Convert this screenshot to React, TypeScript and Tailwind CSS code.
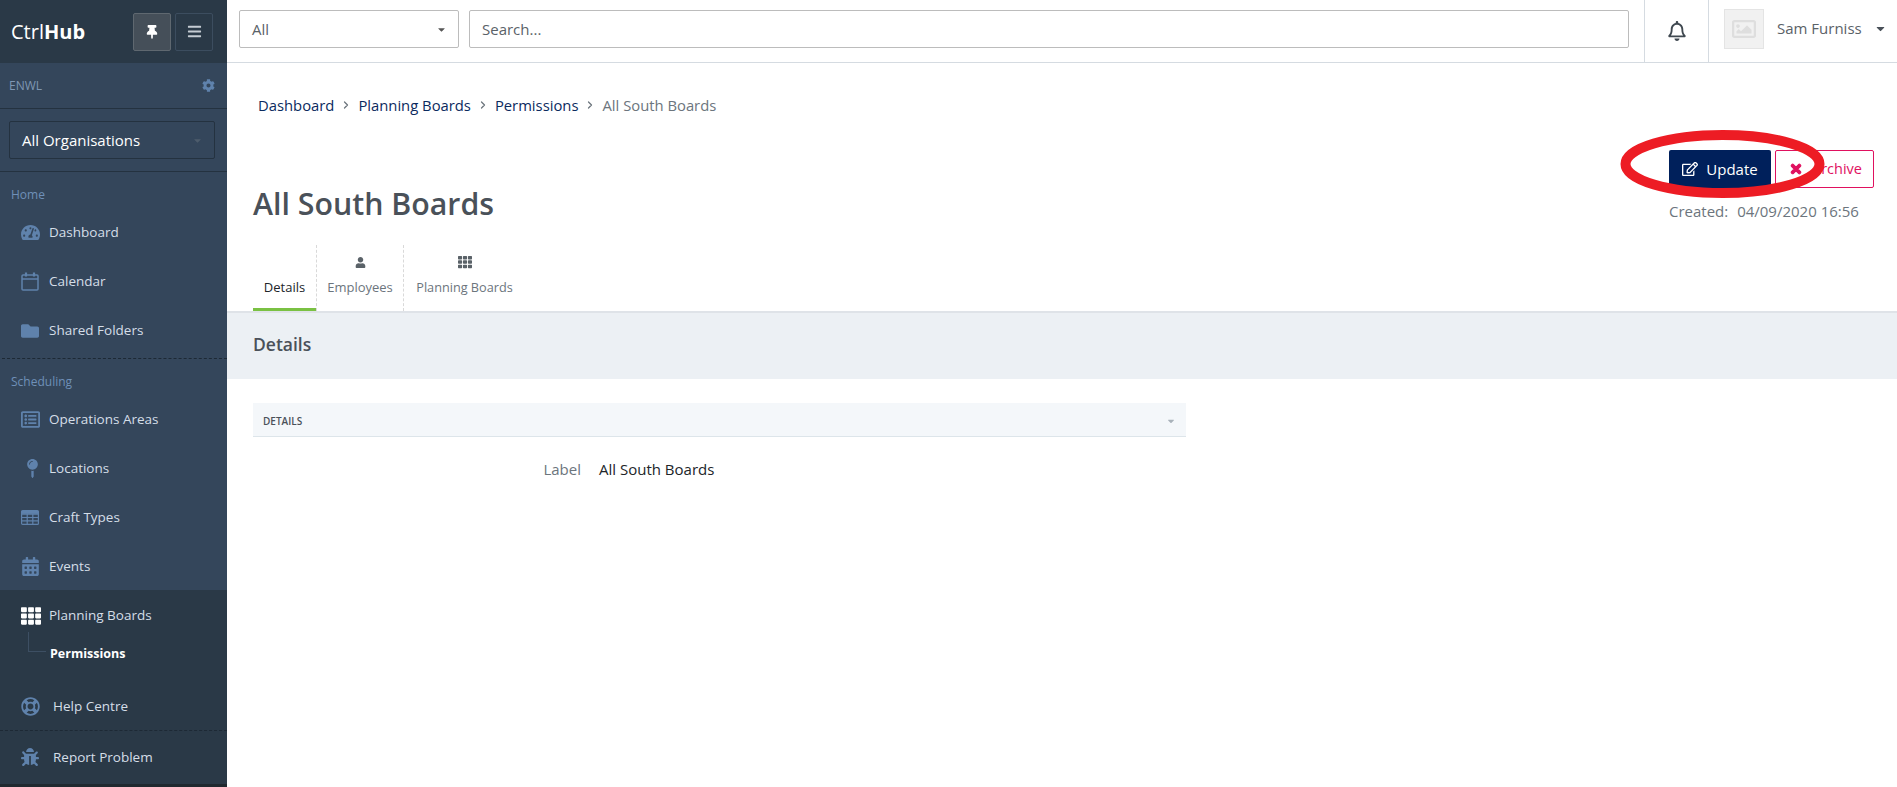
import type { ReactNode } from 'react';
import { ChevronRight } from 'lucide-react';
import {
    FaBars,
    FaBug,
    FaCalendarAlt,
    FaCaretDown,
    FaCog,
    FaFolder,
    FaMapPin,
    FaRegBell,
    FaRegEdit,
    FaRegImage,
    FaRegLifeRing,
    FaRegListAlt,
    FaTachometerAlt,
    FaTh,
    FaThumbtack,
    FaTimes,
    FaUser,
} from 'react-icons/fa';

const CalendarIcon = () => (
    <svg width="18" height="19" viewBox="0 0 18 19" fill="none" stroke="currentColor" strokeWidth="1.5">
        <rect x="1" y="3" width="16" height="15" rx="1" />
        <path d="M1 7h16" />
        <path d="M5 0.5v4M13 0.5v4" strokeWidth="2.2" />
    </svg>
);

const GridIcon = () => (
    <svg width="18" height="15" viewBox="0 0 18 15" fill="none" stroke="currentColor" strokeWidth="1.2">
        <rect x="0.6" y="0.6" width="16.8" height="13.8" rx="1" />
        <path d="M0.6 4.2h16.8M0.6 7.5h16.8M0.6 10.9h16.8M6.2 4.2v10.2M11.8 4.2v10.2" />
        <path d="M0.6 2.4h16.8" strokeWidth="3" />
    </svg>
);

const NavItem = ({ icon, label }: { icon: ReactNode; label: string }) => (
    <div className="flex h-[49px] items-center pl-[21px] text-[13.5px] text-[#d5dee8]">
        <span className="w-[28px] shrink-0 text-[#5f82ac]">{icon}</span>
        {label}
    </div>
);

const Crumb = ({ label }: { label: string }) => (
    <>
        <span className="text-[#0b2a5e]">{label}</span>
        <ChevronRight size={12} strokeWidth={2.5} className="mx-[6px] text-[#6c757d]" />
    </>
);

export default function App() {
    return (
        <div className="relative flex h-screen w-full overflow-hidden bg-white font-['Open_Sans','Noto_Sans',sans-serif] text-[#4a5159]">
            <aside className="flex h-full w-[227px] shrink-0 flex-col bg-[#34465b]">
                <div className="flex h-[63px] shrink-0 items-center justify-between bg-[#2a3947] pl-[11px] pr-[14px]">
                    <span className="text-[20px] text-white">
                        Ctrl<span className="font-bold">Hub</span>
                    </span>
                    <div className="flex gap-[4px]">
                        <button className="flex h-[38px] w-[38px] items-center justify-center rounded-[2px] border border-[#5f6870] bg-[#454f59] text-[14px] text-white">
                            <FaThumbtack />
                        </button>
                        <button className="flex h-[38px] w-[38px] items-center justify-center rounded-[2px] border border-[#3c4d5f] text-[15px] text-[#c5ccd3]">
                            <FaBars />
                        </button>
                    </div>
                </div>

                <div className="flex h-[46px] shrink-0 items-center justify-between border-b border-[#243240] pl-[9px] pr-[12px] text-[12px] text-[#7f97b3]">
                    ENWL
                    <FaCog className="text-[13px] text-[#5f82ac]" />
                </div>
                <div className="flex h-[63px] shrink-0 items-center border-b border-[#243240] pl-[9px] pr-[12px]">
                    <div className="flex h-[38px] w-full items-center justify-between rounded-[2px] border border-[#243240] pl-[12px] pr-[11px] text-[15px] text-white">
                        All Organisations
                        <FaCaretDown className="text-[11px] text-[#4d5c6c]" />
                    </div>
                </div>

                <div className="pl-[11px] pt-[13px] text-[12px] leading-[20px] text-[#6f90b8]">Home</div>
                <div className="mt-[3px]">
                    <NavItem icon={<FaTachometerAlt className="text-[19px]" />} label="Dashboard" />
                    <NavItem icon={<CalendarIcon />} label="Calendar" />
                    <NavItem icon={<FaFolder className="text-[18px]" />} label="Shared Folders" />
                </div>
                <div className="ml-[2px] mt-[3px] border-t border-dashed border-[#1d2935]" />
                <div className="pl-[11px] pt-[13px] text-[12px] leading-[20px] text-[#6f90b8]">Scheduling</div>
                <div className="mt-[2px] [&>div]:pt-[2px]">
                    <NavItem icon={<FaRegListAlt className="text-[19px]" />} label="Operations Areas" />
                    <NavItem icon={<FaMapPin className="ml-[2px] text-[19px]" />} label="Locations" />
                    <NavItem icon={<GridIcon />} label="Craft Types" />
                    <NavItem icon={<FaCalendarAlt className="text-[19px]" />} label="Events" />
                </div>

                <div className="flex flex-1 flex-col bg-[#2a3947]">
                    <div className="flex h-[49px] items-center pl-[21px] pt-[2px] text-[13.5px] text-[#d5dee8]">
                        <span className="w-[28px] shrink-0 text-white">
                            <FaTh className="text-[20px]" />
                        </span>
                        Planning Boards
                    </div>
                    <div className="relative h-[28px] pl-[50px] text-[12.5px] font-bold leading-[29px] text-white">
                        <span className="absolute left-[28px] top-[-7px] h-[20px] w-[18px] border-b border-l border-[#3d4f63]" />
                        Permissions
                    </div>
                    <div className="mt-[15px] flex h-[49px] items-center border-b border-dashed border-[#1d2935] pl-[21px] text-[13.5px] text-[#d5dee8]">
                        <span className="w-[32px] shrink-0 text-[#5f82ac]">
                            <FaRegLifeRing className="text-[19px]" />
                        </span>
                        Help Centre
                    </div>
                    <div className="flex h-[52px] items-center pl-[21px] text-[13.5px] text-[#d5dee8]">
                        <span className="w-[32px] shrink-0 text-[#5f82ac]">
                            <FaBug className="text-[18px]" />
                        </span>
                        Report Problem
                    </div>
                    <div className="mt-auto h-[3px] bg-[#20292f]" />
                </div>
            </aside>

            <main className="flex min-w-0 flex-1 flex-col">
                <header className="flex h-[63px] shrink-0 items-start border-b border-[#d5dbe1] pl-[12px]">
                    <div className="mt-[10px] flex h-[38px] w-[220px] items-center justify-between rounded-[2px] border border-[#bcbcbc] pl-[12px] pr-[11px] text-[15px] text-[#5a6268]">
                        All
                        <FaCaretDown className="text-[11px] text-[#555]" />
                    </div>
                    <div className="ml-[10px] mt-[10px] flex h-[38px] w-[1160px] items-center rounded-[2px] border border-[#bcbcbc] pl-[12px] text-[15px] text-[#5a6268]">
                        Search...
                    </div>
                    <div className="ml-[15px] flex h-full w-[65px] items-center justify-center border-x border-[#d5dbe1] text-[20px] text-[#3f4850]">
                        <FaRegBell />
                    </div>
                    <div className="ml-[15px] mt-[9px] flex h-[40px] w-[40px] items-center justify-center border border-[#e4e4e4] bg-[#f1f1f1] text-[24px] text-[#dedede]">
                        <FaRegImage />
                    </div>
                    <span className="ml-[13px] mt-[18px] text-[15px] leading-[20px] text-[#5a6268]">Sam Furniss</span>
                    <FaCaretDown className="ml-[12px] mt-[22px] text-[13px] text-[#4a5159]" />
                </header>

                <nav className="flex h-[84px] shrink-0 items-center pl-[31px] text-[14.8px]">
                    <Crumb label="Dashboard" />
                    <Crumb label="Planning Boards" />
                    <Crumb label="Permissions" />
                    <span className="text-[#6c757d]">All South Boards</span>
                </nav>

                <div className="flex h-[98px] shrink-0 justify-between pl-[26px] pr-[23px] pt-[3px]">
                    <h1 className="pt-[33px] text-[30.3px] font-semibold leading-[42px]">All South Boards</h1>
                    <div className="flex flex-col">
                        <div className="flex gap-[4px]">
                            <button className="flex h-[38px] w-[102px] items-center justify-center gap-[8px] rounded-[2px] bg-[#00205b] text-[15px] text-white">
                                <FaRegEdit className="text-[16px]" />
                                Update
                            </button>
                            <button className="flex h-[38px] w-[99px] items-center gap-[9px] rounded-[2px] border border-[#e0115f] pl-[13px] text-[14.5px] text-[#e0115f]">
                                <FaTimes className="text-[14px]" stroke="currentColor" strokeWidth={40} />
                                Archive
                            </button>
                        </div>
                        <div className="mt-[13px] text-[15px] leading-[20px] text-[#6c757d]">
                            Created: <span className="ml-[5px]">04/09/2020 16:56</span>
                        </div>
                    </div>
                </div>

                <div className="flex h-[66px] shrink-0 pl-[26px] text-[13px] leading-[18px]">
                    <div className="flex w-[63px] items-end justify-center border-b-[3px] border-b-[#7ac143] pb-[12px] text-[#212529]">
                        Details
                    </div>
                    <div className="flex w-[88px] flex-col items-center border-x border-dashed border-[#d9d9d9] pt-[10px] text-[#6c757d]">
                        <span className="mb-[9px] flex h-[14px] items-center text-[11px] text-[#5a6268]">
                            <FaUser />
                        </span>
                        Employees
                    </div>
                    <div className="flex w-[121px] flex-col items-center pt-[10px] text-[12.7px] text-[#6c757d]">
                        <span className="mb-[9px] flex h-[14px] items-center text-[14px] text-[#5a6268]">
                            <FaTh />
                        </span>
                        Planning Boards
                    </div>
                </div>

                <div className="flex h-[68px] shrink-0 items-start border-t-2 border-[#dfe3e8] bg-[#ecf0f4] pl-[26px] pt-[19px] text-[17.5px] font-semibold leading-[24px]">
                    Details
                </div>

                <section className="ml-[26px] mt-[24px] w-[933px]">
                    <div className="flex h-[34px] items-center justify-between border-b border-[#dde5ea] bg-[#f4f7fa] pl-[10px] pr-[10px] pt-[3px] text-[10px] font-semibold text-[#4a5159]">
                        DETAILS
                        <FaCaretDown className="text-[10px] text-[#a9b2ba]" />
                    </div>
                    <div className="mt-[22px] flex text-[15px] leading-[20px]">
                        <span className="w-[328px] text-right text-[#6c757d]">Label</span>
                        <span className="ml-[18px] text-[#212529]">All South Boards</span>
                    </div>
                </section>
            </main>

            <svg
                className="pointer-events-none absolute left-[1615px] top-[124px] h-[90px] w-[220px]"
                viewBox="0 0 220 90"
                fill="none"
            >
                <ellipse cx="107.5" cy="40" rx="97" ry="29" stroke="#ed1c24" strokeWidth="10" />
            </svg>
        </div>
    );
}
